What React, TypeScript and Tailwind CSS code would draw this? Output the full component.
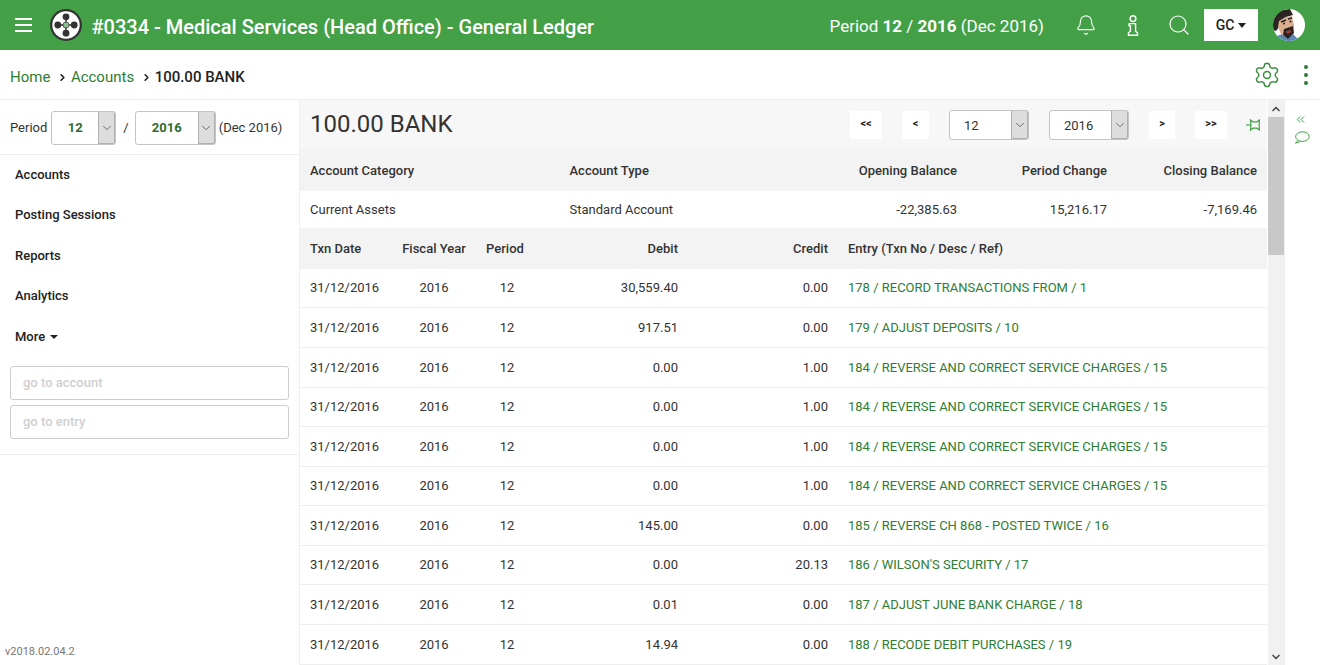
import { Bell, ChevronDown, ChevronRight, ChevronUp, ChevronsLeft, Search, Settings } from "lucide-react";

const ROWS = [
  { debit: "30,559.40", credit: "0.00", entry: "178 / RECORD TRANSACTIONS FROM / 1", h: "h-[39px]" },
  { debit: "917.51", credit: "0.00", entry: "179 / ADJUST DEPOSITS / 10", h: "h-[40px]" },
  { debit: "0.00", credit: "1.00", entry: "184 / REVERSE AND CORRECT SERVICE CHARGES / 15", h: "h-[40px]" },
  { debit: "0.00", credit: "1.00", entry: "184 / REVERSE AND CORRECT SERVICE CHARGES / 15", h: "h-[39px]" },
  { debit: "0.00", credit: "1.00", entry: "184 / REVERSE AND CORRECT SERVICE CHARGES / 15", h: "h-[40px]" },
  { debit: "0.00", credit: "1.00", entry: "184 / REVERSE AND CORRECT SERVICE CHARGES / 15", h: "h-[39px]" },
  { debit: "145.00", credit: "0.00", entry: "185 / REVERSE CH 868 - POSTED TWICE / 16", h: "h-[40px]" },
  { debit: "0.00", credit: "20.13", entry: "186 / WILSON'S SECURITY / 17", h: "h-[39px]" },
  { debit: "0.01", credit: "0.00", entry: "187 / ADJUST JUNE BANK CHARGE / 18", h: "h-[40px]" },
  { debit: "14.94", credit: "0.00", entry: "188 / RECODE DEBIT PURCHASES / 19", h: "h-[40px]" },
];

const NAV = ["Accounts", "Posting Sessions", "Reports", "Analytics"];
const COLS = "grid grid-cols-[92px_84px_62px_150px_150px_1fr] items-center";
const SUMMARY = "grid grid-cols-[259.5px_1fr_150px_150px_150px] items-center px-[10px]";

function Logo() {
  return (
    <svg width="32" height="32" viewBox="0 0 32 32">
      <circle cx="16" cy="16" r="14.8" fill="#fff" stroke="#333" strokeWidth="2.2" />
      <path d="M16 7v18M7 16h18" stroke="#333" strokeWidth="1.4" />
      <circle cx="16" cy="7.8" r="3.4" fill="#333" />
      <circle cx="16" cy="24.2" r="3.4" fill="#333" />
      <circle cx="7.8" cy="16" r="3.4" fill="#333" />
      <circle cx="24.2" cy="16" r="3.4" fill="#333" />
      <circle cx="16" cy="16" r="3" fill="#86c28f" stroke="#333" strokeWidth="0.7" />
    </svg>
  );
}

function InfoIcon() {
  return (
    <svg width="12" height="21" viewBox="0 0 12 21" fill="none" stroke="#fff" strokeWidth="1.4" strokeLinejoin="round">
      <circle cx="6" cy="3.6" r="2.9" />
      <path d="M2 8.6h6.6v7.6l1.9 1.5v2.6H1.4v-2.6l2-1.5v-5.4H2z" />
    </svg>
  );
}

function Avatar() {
  return (
    <svg width="32" height="32" viewBox="0 0 32 32">
      <clipPath id="av">
        <circle cx="16" cy="16" r="16" />
      </clipPath>
      <g clipPath="url(#av)">
        <rect width="32" height="32" fill="#fff" />
        <path d="M4 27l5-2 5 4 6-4 5 5v2H4z" fill="#5b86b8" />
        <path d="M0 21V8L8 1l9-1 3 6-7 2-5 3-2 7-3 4z" fill="#2a2422" />
        <path d="M6 12l7-4 6-1 2 9-1 8-6 5-6-4-3-7z" fill="#dcae90" />
        <path d="M8 13l5-2M15 10l4-1" stroke="#222" strokeWidth="1.5" />
        <circle cx="11" cy="14.5" r="1" fill="#222" />
        <circle cx="17.5" cy="12.5" r="1" fill="#222" />
        <path d="M11 20l9-3 1 7-6 6-5-4z" fill="#2a2422" />
        <path d="M13 22.5l5-1.5-.5 2.5-3.5 1z" fill="#b5403a" />
      </g>
    </svg>
  );
}

function PinIcon() {
  return (
    <svg width="14" height="12" viewBox="0 0 14 12" fill="none" stroke="#43a047" strokeWidth="1.2">
      <path d="M0 6h4.800" />
      <path d="M4.500 1 7 2.800h4L13.500 1c-.5 3-.5 6.500 0 10L11 9.200H7L4.500 11c.5-3.500.5-7 0-10z" />
    </svg>
  );
}

function CommentIcon() {
  return (
    <svg width="16" height="13" viewBox="0 0 16 13" fill="none" stroke="#43a047" strokeWidth="1">
      <ellipse cx="8.4" cy="5.6" rx="6.8" ry="4.8" />
      <path d="M4 9.400 1.400 12.200l5-1.700" fill="#fff" />
    </svg>
  );
}

function Select({ value, box, text }: { value: string; box: string; text: string }) {
  return (
    <div className={`flex items-stretch rounded-[3px] border border-[#c4c4c4] bg-white ${box}`}>
      <div className={`flex flex-1 items-center ${text}`}>{value}</div>
      <div className="flex w-[17px] items-center justify-center rounded-r-[2px] border-b border-l border-r border-[#b0b0b0] bg-[#dddddd] text-[#555]">
        <ChevronDown size={14} strokeWidth={1.4} />
      </div>
    </div>
  );
}

function PageButton({ label, wide }: { label: string; wide: string }) {
  return (
    <div className={`flex h-[28px] items-center justify-center bg-white text-[11px] font-bold text-[#222] ${wide}`}>
      {label}
    </div>
  );
}

export default function App() {
  return (
    <div className="flex h-[665px] w-[1320px] flex-col overflow-hidden bg-white font-['Roboto',sans-serif] text-[13px] text-[#333]">
      {/* Top bar */}
      <header className="flex h-[50px] shrink-0 items-center bg-[#43a047] text-white">
        <div className="ml-[15px] flex w-[17px] flex-col gap-[4px]">
          <span className="h-[2px] bg-white" />
          <span className="h-[2px] bg-white" />
          <span className="h-[2px] bg-white" />
        </div>
        <div className="ml-[18px]">
          <Logo />
        </div>
        <div className="ml-[9.5px] mt-[4px] text-[20px] font-medium">#0334 - Medical Services (Head Office) - General Ledger</div>
        <div className="ml-auto mt-[4px] text-[17px]">
          Period <b className="font-bold">12</b> / <b className="font-bold">2016</b> (Dec 2016)
        </div>
        <Bell className="ml-[31px]" size={22} strokeWidth={1.2} />
        <div className="ml-[30px]">
          <InfoIcon />
        </div>
        <Search className="ml-[28px]" size={24} strokeWidth={1.2} />
        <div className="ml-[13px] flex h-[32px] w-[54px] items-center justify-center gap-[4px] bg-white text-[14px] font-medium text-[#222]">
          GC
          <span className="mt-[1px] border-x-[4px] border-t-[5px] border-x-transparent border-t-[#222]" />
        </div>
        <div className="ml-[15px] mr-[15px]">
          <Avatar />
        </div>
      </header>

      {/* Breadcrumb */}
      <div className="flex h-[50px] shrink-0 items-center border-b border-[#eeeeee] pl-[10px] text-[15px]">
        <div className="mt-[6px] flex items-center">
          <span className="text-[#2e7d32]">Home</span>
          <ChevronRight className="ml-[6.5px] text-[#222]" size={11} strokeWidth={3.5} />
          <span className="ml-[3px] text-[#2e7d32]">Accounts</span>
          <ChevronRight className="ml-[6.5px] text-[#222]" size={11} strokeWidth={3.5} />
          <span className="ml-[3px] font-medium text-[#222]">100.00 BANK</span>
        </div>
        <Settings className="ml-auto text-[#388e3c]" size={28} strokeWidth={1.25} />
        <div className="ml-[23px] mr-[12px] flex flex-col gap-[4px]">
          <span className="h-[4px] w-[4px] rounded-full bg-[#2e7d32]" />
          <span className="h-[4px] w-[4px] rounded-full bg-[#2e7d32]" />
          <span className="h-[4px] w-[4px] rounded-full bg-[#2e7d32]" />
        </div>
      </div>

      <div className="flex min-h-0 flex-1">
        {/* Sidebar */}
        <aside className="relative flex w-[300px] shrink-0 flex-col border-r border-[#eeeeee]">
          <div className="flex h-[55px] items-center border-b border-[#eeeeee] pl-[10px] pt-[2px]">
            <span>Period</span>
            <Select value="12" box="ml-[4px] h-[34px] w-[65px]" text="justify-center font-bold text-[#2e6b32]" />
            <span className="ml-[7px]">/</span>
            <Select value="2016" box="ml-[6px] h-[34px] w-[81px]" text="justify-center font-bold text-[#2e6b32]" />
            <span className="ml-[3px]">(Dec 2016)</span>
          </div>
          <nav className="-mt-[0.4px] pl-[15px] font-medium text-[#222]">
            {NAV.map((item) => (
              <div key={item} className="flex h-[40.4px] items-center">
                {item}
              </div>
            ))}
            <div className="flex h-[40.4px] items-center gap-[5px]">
              More
              <span className="mt-[2px] border-x-[4px] border-t-[4px] border-x-transparent border-t-[#222]" />
            </div>
          </nav>
          <div className="flex flex-col gap-[5px] border-b border-[#eeeeee] px-[10px] pb-[15px] pt-[9px] font-medium text-[#cfcfcf]">
            <div className="flex h-[34px] items-center rounded-[3px] border border-[#cccccc] pl-[12px]">go to account</div>
            <div className="flex h-[34px] items-center rounded-[3px] border border-[#cccccc] pl-[12px]">go to entry</div>
          </div>
          <div className="mt-auto pb-[5px] pl-[5px] text-[11px] text-[#777]">v2018.02.04.2</div>
        </aside>

        {/* Main */}
        <main className="flex w-[968px] min-w-0 shrink-0 flex-col border-r border-[#ffffff]">
          <div className="flex h-[49px] shrink-0 items-center bg-[#f7f7f7] pl-[10px]">
            <div className="mb-[2px] text-[24px] text-[#333]">100.00 BANK</div>
            <PageButton label="<<" wide="ml-auto w-[32px]" />
            <PageButton label="<" wide="ml-[20px] w-[27px]" />
            <Select value="12" box="ml-[20px] mt-[1px] h-[30px] w-[80px]" text="pl-[14px] pt-[1px]" />
            <Select value="2016" box="ml-[20px] mt-[1px] h-[30px] w-[80px]" text="pl-[14px] pt-[1px]" />
            <PageButton label=">" wide="ml-[20px] w-[26px]" />
            <PageButton label=">>" wide="ml-[20px] w-[32px]" />
            <div className="ml-[19px] mr-[7px]">
              <PinIcon />
            </div>
          </div>
          <div className={`${SUMMARY} h-[42px] shrink-0 bg-[#f3f3f3] pt-[1px] font-medium`}>
            <div>Account Category</div>
            <div>Account Type</div>
            <div className="text-right">Opening Balance</div>
            <div className="text-right">Period Change</div>
            <div className="text-right">Closing Balance</div>
          </div>
          <div className={`${SUMMARY} h-[37px] shrink-0`}>
            <div>Current Assets</div>
            <div>Standard Account</div>
            <div className="text-right">-22,385.63</div>
            <div className="text-right">15,216.17</div>
            <div className="text-right">-7,169.46</div>
          </div>
          <div className={`${COLS} h-[41px] shrink-0 bg-[#f3f3f3] font-medium`}>
            <div className="pl-[10px]">Txn Date</div>
            <div className="text-center">Fiscal Year</div>
            <div className="pr-[4px] text-center">Period</div>
            <div className="pr-[10px] text-right">Debit</div>
            <div className="pr-[10px] text-right">Credit</div>
            <div className="pl-[10px]">Entry (Txn No / Desc / Ref)</div>
          </div>
          {ROWS.map((row, i) => (
            <div key={i} className={`${COLS} ${row.h} shrink-0 border-b border-[#eeeeee]`}>
              <div className="pl-[10px]">31/12/2016</div>
              <div className="text-center">2016</div>
              <div className="text-center">12</div>
              <div className="pr-[10px] text-right">{row.debit}</div>
              <div className="pr-[10px] text-right">{row.credit}</div>
              <div className="pl-[10px] text-[#2e7d32]">{row.entry}</div>
            </div>
          ))}
        </main>

        {/* Scrollbar */}
        <div className="flex w-[16px] shrink-0 flex-col bg-[#f1f1f1]">
          <div className="flex h-[17px] items-center justify-center text-[#505050]">
            <ChevronUp size={12} strokeWidth={3.5} />
          </div>
          <div className="h-[138px] bg-[#c8c8c8]" />
          <div className="mt-auto flex h-[17px] items-center justify-center text-[#505050]">
            <ChevronDown size={12} strokeWidth={3.5} />
          </div>
        </div>

        {/* Right rail */}
        <div className="flex flex-1 flex-col items-start border-l border-[#eeeeee] pl-[9px] pt-[13px]">
          <ChevronsLeft className="text-[#43a047]" size={13} strokeWidth={1.8} />
          <div className="mt-[5px]">
            <CommentIcon />
          </div>
        </div>
      </div>
    </div>
  );
}
